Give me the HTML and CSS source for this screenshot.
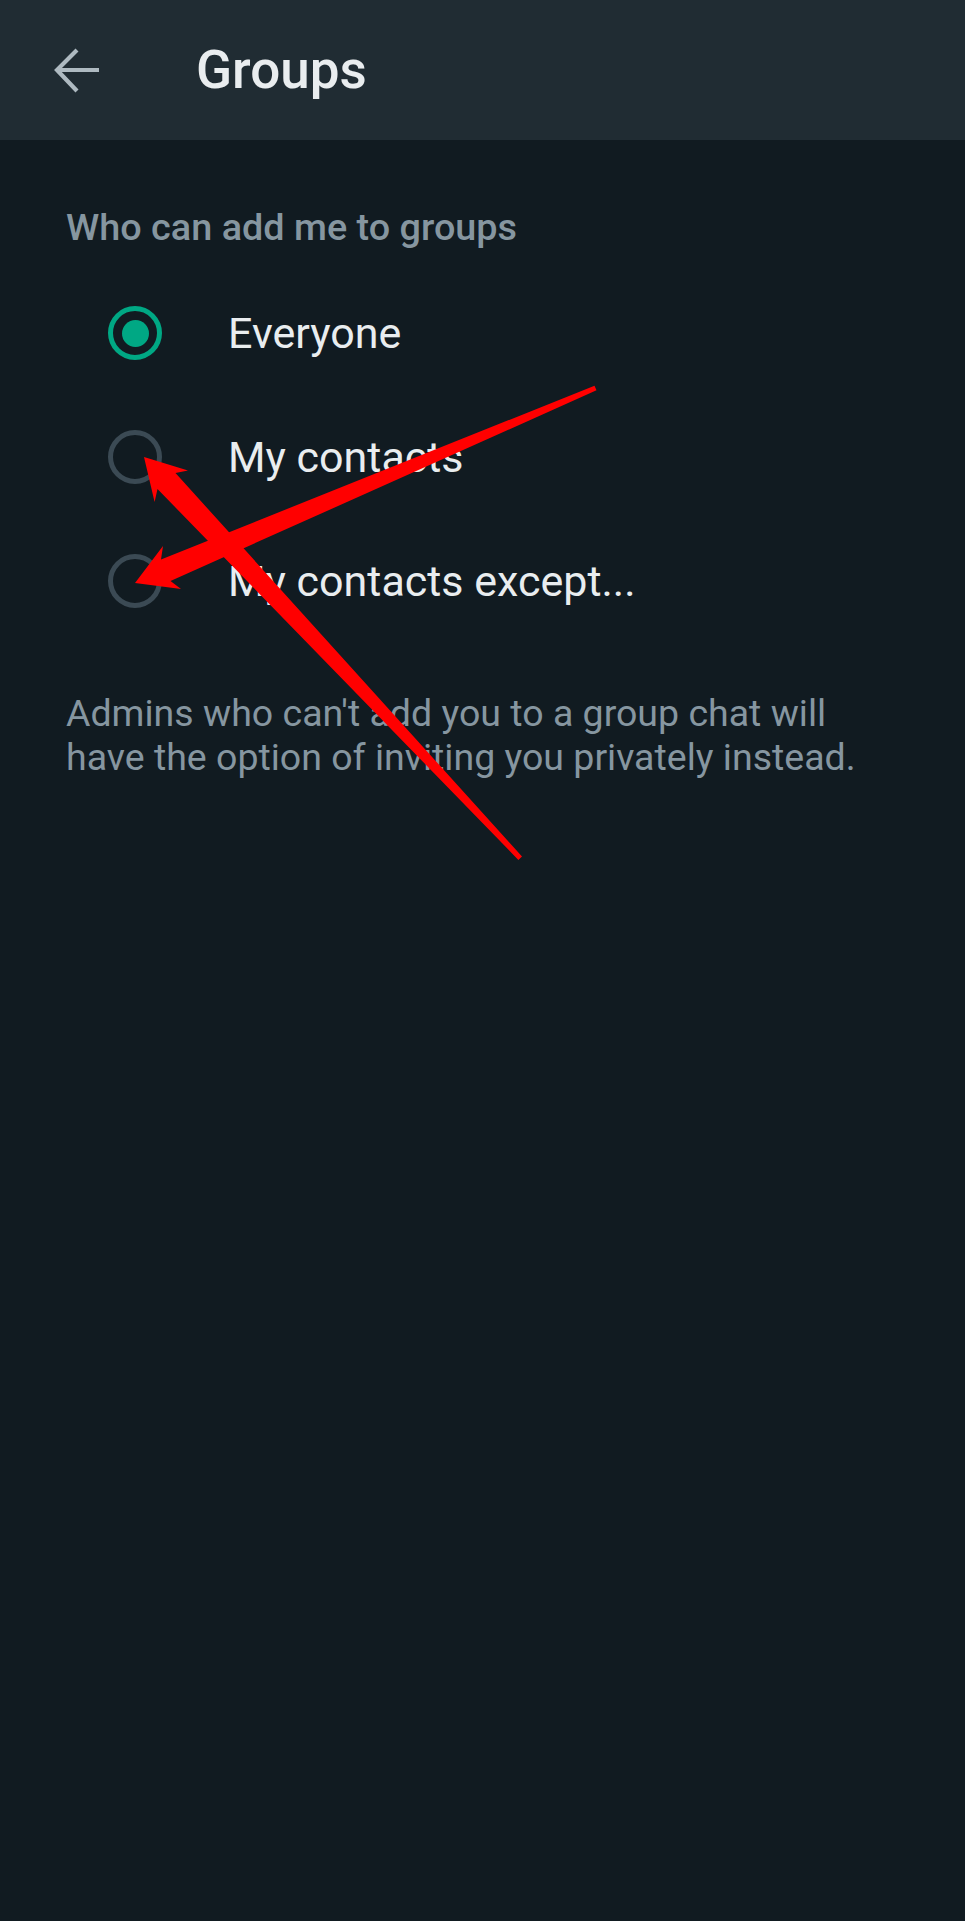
FILE: index.html
```html
<!DOCTYPE html>
<html lang="en">
<head>
<meta charset="utf-8">
<title>Groups</title>
<link rel="stylesheet" href="styles.css">
</head>
<body>
<div class="screen">
  <header class="appbar">
    <button class="back" aria-label="Back">
      <svg width="48" height="48" viewBox="0 0 48 48" aria-hidden="true">
        <path d="M45 22H4M23 2 3 22 23 43" fill="none" stroke="#aebac1" stroke-width="4.2" stroke-linecap="butt" stroke-linejoin="miter"/>
      </svg>
    </button>
    <h1 class="title">Groups</h1>
  </header>

  <main class="content">
    <p class="section-label">Who can add me to groups</p>
    <ul class="options">
      <li class="option">
        <span class="radio checked"><span class="dot"></span></span>
        <span class="option-text">Everyone</span>
      </li>
      <li class="option">
        <span class="radio"></span>
        <span class="option-text">My contacts</span>
      </li>
      <li class="option">
        <span class="radio"></span>
        <span class="option-text">My contacts except...</span>
      </li>
    </ul>
    <p class="note">Admins who can't add you to a group chat will have the option of inviting you privately instead.</p>
  </main>

  <svg class="annotations" width="965" height="1921" viewBox="0 0 965 1921" aria-hidden="true">
    <polygon fill="#ff0000" points="135,583 163,546 161,559.5 594.5,385.7 596.5,390.3 170.5,581 181,589"/>
    <polygon fill="#ff0000" points="144,457 188,470.5 175.5,473 522,856.5 518.4,859.9 157.5,489 154.6,502"/>
  </svg>
</div>
</body>
</html>
```
FILE: styles.css
```css
* {
  box-sizing: border-box;
}

html, body {
  margin: 0;
  padding: 0;
  background: #111b21;
}

.screen {
  position: relative;
  width: 965px;
  min-height: 1921px;
  background: #111b21;
  font-family: Roboto, "Noto Sans", "Liberation Sans", sans-serif;
  overflow: hidden;
}

.appbar {
  height: 140px;
  background: #202c33;
  display: flex;
  align-items: center;
}

.back {
  width: 48px;
  height: 48px;
  margin-left: 54px;
  margin-top: 4px;
  padding: 0;
  border: 0;
  background: transparent;
  display: flex;
}

.title {
  margin: 0 0 0 94px;
  font-size: 53px;
  font-weight: 500;
  color: #e9edef;
  letter-spacing: 0;
  line-height: 1;
}

.content {
  padding: 0 66px;
}

.section-label {
  margin: 65px 0 0;
  font-size: 37.8px;
  font-weight: 500;
  line-height: 44px;
  color: #8696a0;
}

.options {
  list-style: none;
  margin: 22px 0 0;
  padding: 0;
}

.option {
  height: 124px;
  display: flex;
  align-items: center;
}

.radio {
  width: 54px;
  height: 54px;
  margin-left: 42px;
  border: 5px solid #3b4a54;
  border-radius: 50%;
  display: flex;
  align-items: center;
  justify-content: center;
  flex: none;
}

.radio.checked {
  border-color: #00a884;
}

.dot {
  width: 27px;
  height: 27px;
  border-radius: 50%;
  background: #00a884;
}

.option-text {
  margin-left: 66px;
  font-size: 43px;
  color: #e9edef;
  line-height: 1;
}

.note {
  margin: 48px 0 0;
  font-size: 37.5px;
  line-height: 44px;
  color: #8696a0;
}

.annotations {
  position: absolute;
  top: 0;
  left: 0;
  pointer-events: none;
}
```
